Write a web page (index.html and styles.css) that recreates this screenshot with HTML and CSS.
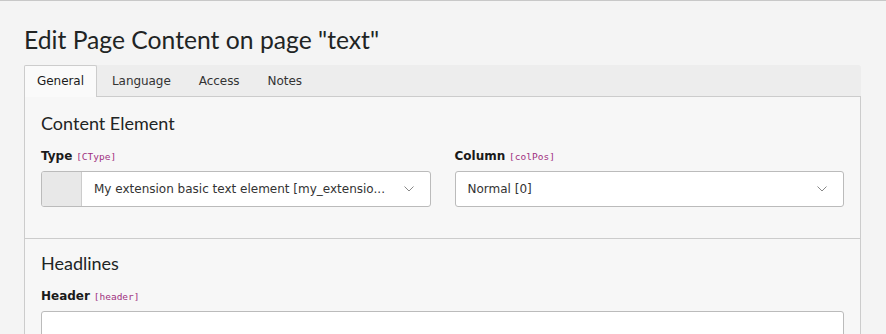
FILE: index.html
```html
<!DOCTYPE html>
<html lang="en">
<head>
<meta charset="utf-8">
<title>Edit Page Content</title>
<link rel="stylesheet" href="styles.css">
</head>
<body>
<div class="page">
  <h1 class="title">Edit Page Content on page "text"</h1>
  <ul class="tabs">
    <li class="tab active">General</li>
    <li class="tab">Language</li>
    <li class="tab">Access</li>
    <li class="tab">Notes</li>
  </ul>
  <div class="panel">
    <section class="section">
      <h2 class="section-title">Content Element</h2>
      <div class="row">
        <div class="field">
          <div class="label"><b>Type</b> <code>[CType]</code></div>
          <div class="select">
            <span class="select-icon"></span>
            <span class="select-text">My extension basic text element [my_extensio...</span>
            <svg class="chevron" width="10" height="6" viewBox="0 0 10 6"><polyline points="0.5,0.5 5,5 9.5,0.5" fill="none" stroke="#888" stroke-width="1"/></svg>
          </div>
        </div>
        <div class="field">
          <div class="label"><b>Column</b> <code>[colPos]</code></div>
          <div class="select">
            <span class="select-text">Normal [0]</span>
            <svg class="chevron" width="10" height="6" viewBox="0 0 10 6"><polyline points="0.5,0.5 5,5 9.5,0.5" fill="none" stroke="#888" stroke-width="1"/></svg>
          </div>
        </div>
      </div>
    </section>
    <section class="section second">
      <h2 class="section-title">Headlines</h2>
      <div class="field">
        <div class="label"><b>Header</b> <code>[header]</code></div>
        <div class="input"></div>
      </div>
    </section>
  </div>
</div>
</body>
</html>
```
FILE: styles.css
```css
html, body {
  margin: 0;
  padding: 0;
}
body {
  background: #f4f4f4;
  border-top: 1px solid #c8c8c8;
  font-family: "DejaVu Sans", Verdana, sans-serif;
  font-size: 12px;
  line-height: 18px;
  color: #333;
  overflow: hidden;
  height: 333px;
}
.page {
  padding: 0 25px 0 24px;
}
.title {
  margin: 23px 0 9px 0;
  font-family: Lato, "Open Sans", sans-serif;
  font-weight: 400;
  font-size: 24.7px;
  line-height: 32px;
  color: #212424;
}
.tabs {
  display: flex;
  list-style: none;
  margin: 0;
  padding: 0;
  height: 31px;
  background: #ededed;
  border-bottom: 1px solid #cccccc;
  border-radius: 0 3px 0 0;
}
.tab {
  padding: 6px 12px;
  margin-right: 2px;
  border: 1px solid transparent;
  border-bottom: 0;
  color: #333;
  letter-spacing: -0.05px;
}
.tab.active {
  background: #fafafa;
  border-color: #cccccc;
  border-radius: 2px 2px 0 0;
  height: 19px;
  padding-bottom: 6px;
  margin-bottom: -1px;
  color: #1a1a1a;
  position: relative;
}
.panel {
  background: #f7f7f7;
  border-left: 1px solid #cccccc;
  border-right: 1px solid #cccccc;
  height: 300px;
}
.section {
  padding: 14px 16px 31px 16px;
}
.section.second {
  border-top: 1px solid #cccccc;
  padding-top: 12px;
}
.section-title {
  margin: 0 0 12px 0;
  font-family: Lato, "Open Sans", sans-serif;
  font-weight: 400;
  font-size: 18px;
  line-height: 24px;
  color: #212424;
}
.row {
  display: grid;
  grid-template-columns: 1fr 1fr;
  column-gap: 24px;
}
.label {
  margin-bottom: 5px;
  color: #1a1a1a;
}
.label b {
  font-weight: 700;
}
.label code {
  font-family: "DejaVu Sans Mono", "Liberation Mono", monospace;
  font-size: 9.5px;
  color: #a0307f;
}
.select {
  display: flex;
  align-items: center;
  height: 34px;
  background: #fff;
  border: 1px solid #bbbbbb;
  border-radius: 3px;
  overflow: hidden;
}
.select-icon {
  align-self: stretch;
  width: 39px;
  background: #e8e8e8;
  border-right: 1px solid #cccccc;
  flex: none;
}
.select-text {
  flex: 1;
  padding-left: 12px;
  white-space: nowrap;
  overflow: hidden;
  color: #333;
}
.chevron {
  flex: none;
  margin: 0 16px 0 12px;
}
.input {
  height: 34px;
  background: #fff;
  border: 1px solid #bbbbbb;
  border-radius: 3px;
}
```
